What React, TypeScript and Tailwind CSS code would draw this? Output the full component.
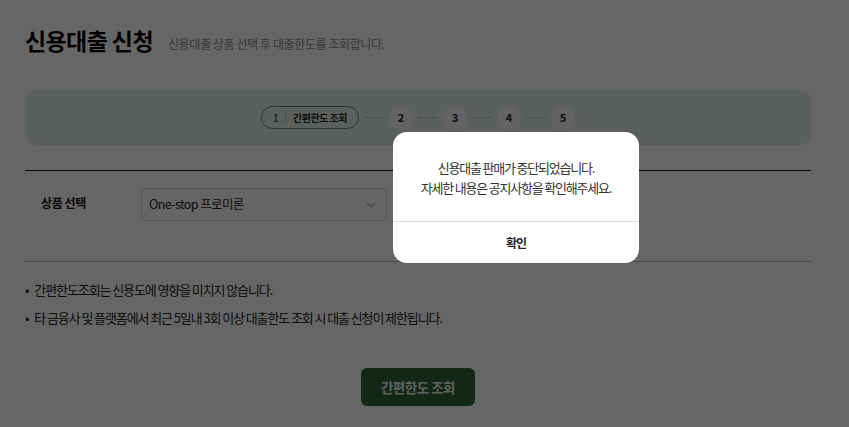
const font = { fontFamily: '"Noto Sans CJK KR", "Noto Sans", sans-serif' };

function Steps() {
  return (
    <div className="flex items-center">
      <div className="flex h-[23px] items-center rounded-full border border-[#737d73] px-[11px] text-[10px] font-bold tracking-[-0.5px] text-[#222]">
        <span className="font-normal">1</span>
        <span className="mx-[7px] h-[10px] w-px bg-[#b8c2b8]" />
        <span>간편한도 조회</span>
      </div>
      {[2, 3, 4, 5].map((n) => (
        <div key={n} className="flex items-center">
          <span className="mx-[6px] w-[18px] border-t border-dotted border-[#9aa49a]" />
          <span className="flex h-[24px] w-[24px] items-center justify-center rounded-full bg-[#f7f7f7] text-[11px] font-bold text-[#222]">
            {n}
          </span>
        </div>
      ))}
    </div>
  );
}

export default function App() {
  return (
    <div className="relative h-[427px] w-[849px] overflow-hidden bg-white" style={font}>
      <div className="w-[811px] pl-[25px]">
        <div className="flex items-end gap-[15px] pt-[24px]">
          <h1 className="text-[23px] font-bold leading-[32px] tracking-[-0.6px] text-black">신용대출 신청</h1>
          <p className="pb-[3px] text-[12px] leading-[18px] tracking-[-0.4px] text-[#8a8a8a]">
            신용대출 상품 선택 후 대출한도를 조회합니다.
          </p>
        </div>

        <div className="mt-[34px] flex h-[55px] items-center justify-center rounded-[10px] bg-[#e6f0e6]">
          <Steps />
        </div>

        <div className="mt-[25px] border-t-[1.5px] border-[#111]" />
        <div className="flex h-[91px] items-start border-b border-[#bbb] pt-[17px]">
          <span className="w-[116px] pl-[16px] pt-[6px] text-[12px] font-bold tracking-[-0.4px] text-[#111]">상품 선택</span>
          <div className="flex h-[33px] w-[246px] items-center justify-between rounded-[4px] border border-[#d6d6d6] bg-[#fdfdfd] pl-[7px] pr-[10px]">
            <span className="text-[12.5px] tracking-[-0.6px] text-[#222]">One-stop 프로미론</span>
            <svg width="10" height="6" viewBox="0 0 10 6" fill="none">
              <path d="M1 1l4 4 4-4" stroke="#aaa" strokeWidth="1.2" />
            </svg>
          </div>
        </div>

        <ul className="mt-[19px] flex flex-col gap-[10px] text-[13px] leading-[18px] tracking-[-1.1px] text-[#222]">
          <li className="flex gap-[6px]">
            <span>•</span>
            <span>간편한도조회는 신용도에 영향을 미치지 않습니다.</span>
          </li>
          <li className="flex gap-[6px]">
            <span>•</span>
            <span>타 금융사 및 플랫폼에서 최근 5일내 3회 이상 대출한도 조회 시 대출 신청이 제한됩니다.</span>
          </li>
        </ul>

        <div className="mt-[41px] flex justify-center">
          <button className="h-[38px] w-[114px] rounded-[6px] bg-[#2f6238] text-[13.5px] font-bold tracking-[-0.5px] text-[#f0f4f0]">
            간편한도 조회
          </button>
        </div>
      </div>

      <div className="absolute inset-0 bg-black/60" />

      <div className="absolute left-[393px] top-[132px] flex w-[246px] flex-col rounded-[14px] bg-white">
        <div className="flex h-[89px] flex-col items-center justify-center pt-[2px] text-[13px] leading-[20px] tracking-[-1.2px] text-[#333]">
          <p>신용대출 판매가 중단되었습니다.</p>
          <p>자세한 내용은 공지사항을 확인해주세요.</p>
        </div>
        <div className="flex h-[42px] items-center justify-center border-t border-[#ddd] text-[12px] font-bold tracking-[-1px] text-[#222]">
          확인
        </div>
      </div>
    </div>
  );
}
